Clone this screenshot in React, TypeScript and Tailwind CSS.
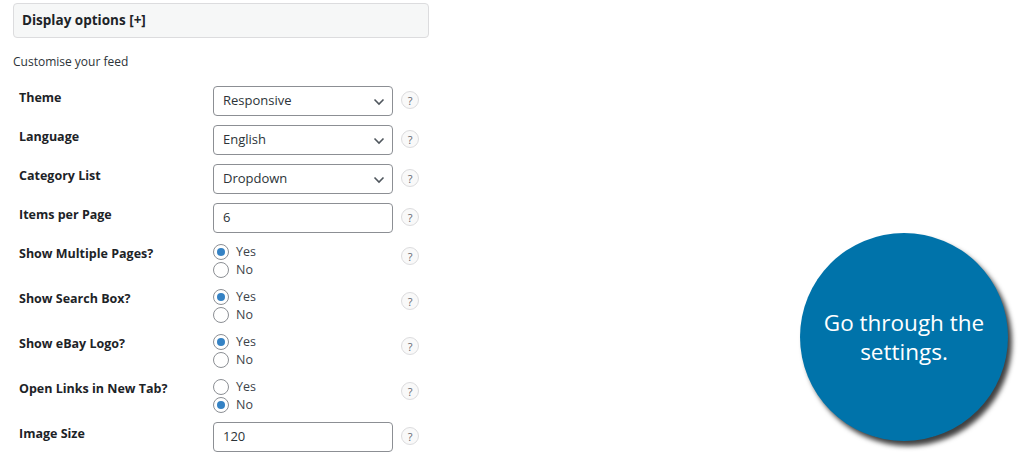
import React from "react";

const font = { fontFamily: '"Open Sans", "Noto Sans", sans-serif' };

function Help() {
  return (
    <div className="ml-[8px] mt-[9px] flex h-[18px] w-[18px] items-center justify-center rounded-full border border-[#dcdcde] bg-[#f9f9f9] text-[11px] leading-none text-[#646970]">
      ?
    </div>
  );
}

function Chevron() {
  return (
    <svg width="12" height="8" viewBox="0 0 12 8" className="absolute right-[7px] top-[11px]">
      <path d="M1.5 1.5 L6 6 L10.5 1.5" fill="none" stroke="#50575e" strokeWidth="1.6" />
    </svg>
  );
}

function Label({ children }: { children: React.ReactNode }) {
  return (
    <div className="w-[200px] shrink-0 pl-[6px] pt-[3px] text-[12.5px] font-bold leading-[18px] text-[#1d2327]">
      {children}
    </div>
  );
}

function SelectRow({ label, value }: { label: string; value: string }) {
  return (
    <div className="flex h-[39px] items-start pt-[4px]">
      <Label>{label}</Label>
      <div className="relative flex h-[30px] w-[180px] items-center rounded-[4px] border border-[#8c8f94] bg-white pl-[9px] text-[13px] text-[#2c3338]">
        {value}
        <Chevron />
      </div>
      <div className="-mt-[4px]">
        <Help />
      </div>
    </div>
  );
}

function InputRow({ label, value }: { label: string; value: string }) {
  return (
    <div className="flex h-[39px] items-start pt-[4px]">
      <Label>{label}</Label>
      <div className="flex h-[30px] w-[180px] items-center rounded-[4px] border border-[#8c8f94] bg-white pl-[9px] text-[13px] text-[#2c3338]">
        {value}
      </div>
      <div className="-mt-[4px]">
        <Help />
      </div>
    </div>
  );
}

function Radio({ checked, text }: { checked: boolean; text: string }) {
  return (
    <div className="flex h-[18px] items-center">
      <div className="flex h-[16px] w-[16px] items-center justify-center rounded-full border border-[#8c8f94] bg-white">
        {checked && <div className="h-[8px] w-[8px] rounded-full bg-[#3582c4]" />}
      </div>
      <span className="ml-[7px] text-[12.5px] text-[#3c434a]">{text}</span>
    </div>
  );
}

function RadioRow({ label, yes }: { label: string; yes: boolean }) {
  return (
    <div className="flex h-[45px] items-start pt-[4px]">
      <Label>{label}</Label>
      <div className="flex w-[180px] flex-col pt-[1px]">
        <Radio checked={yes} text="Yes" />
        <Radio checked={!yes} text="No" />
      </div>
      <div className="-mt-[4px]">
        <Help />
      </div>
    </div>
  );
}

export default function App() {
  return (
    <div className="relative h-[456px] w-[1024px] overflow-hidden bg-white" style={font}>
      <div className="pl-[13px] pt-[3px]">
        <div className="flex h-[35px] w-[416px] items-center rounded-[4px] border border-[#dcdcde] bg-[#f6f7f7] pl-[8px] text-[13.5px] font-bold text-[#1d2327]">
          Display options [+]
        </div>
        <div className="mt-[16px] h-[28px] text-[12px] leading-[16px] text-[#2c3338]">Customise your feed</div>
        <div>
          <SelectRow label="Theme" value="Responsive" />
          <SelectRow label="Language" value="English" />
          <SelectRow label="Category List" value="Dropdown" />
          <InputRow label="Items per Page" value="6" />
          <RadioRow label="Show Multiple Pages?" yes={true} />
          <RadioRow label="Show Search Box?" yes={true} />
          <RadioRow label="Show eBay Logo?" yes={true} />
          <RadioRow label="Open Links in New Tab?" yes={false} />
          <InputRow label="Image Size" value="120" />
        </div>
      </div>
      <div className="absolute left-[800px] top-[233px] flex h-[208px] w-[208px] items-center justify-center rounded-full bg-[#0073aa] text-center text-[22.5px] leading-[29px] text-white shadow-[4px_5px_5px_rgba(0,0,0,0.75)]">
        <div>
          Go through the
          <br />
          settings.
        </div>
      </div>
    </div>
  );
}
